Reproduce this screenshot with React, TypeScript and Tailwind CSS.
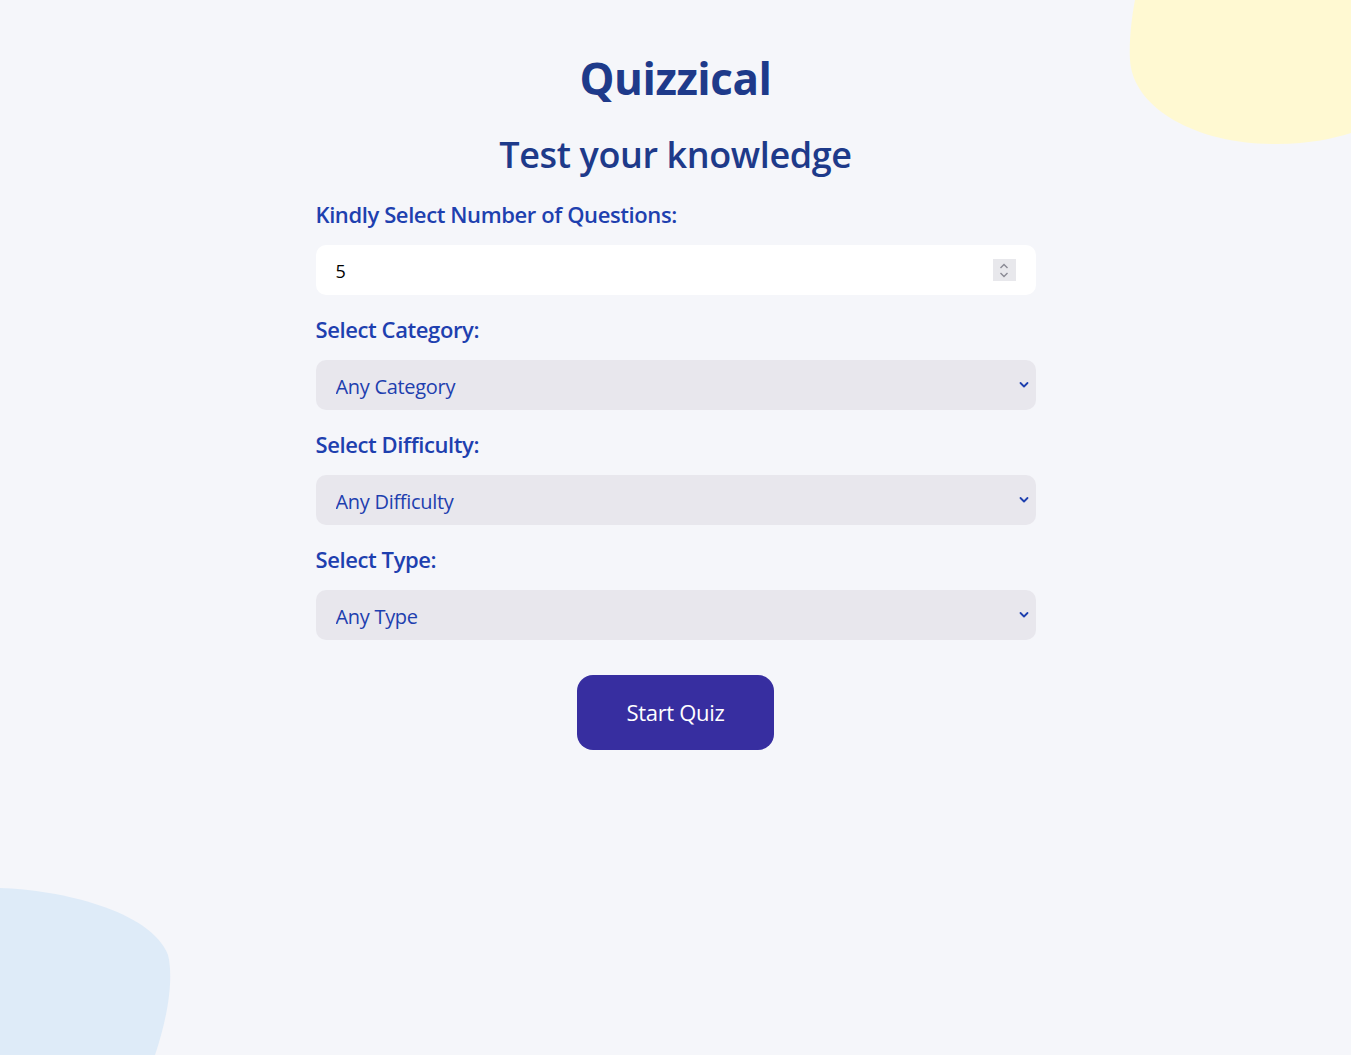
import { useState } from "react";

const font = { fontFamily: '"Open Sans", "Noto Sans", sans-serif' };

function Chevron() {
  return (
    <svg className="pointer-events-none absolute right-[7px] top-1/2 -translate-y-1/2" width="10" height="7" viewBox="0 0 10 7" fill="none">
      <path d="M1.5 1.5 L5 5 L8.5 1.5" stroke="#1e40af" strokeWidth="1.8" strokeLinecap="round" strokeLinejoin="round" />
    </svg>
  );
}

function SelectField({ label, value, options, onChange }: { label: string; value: string; options: string[]; onChange: (v: string) => void }) {
  return (
    <div className="flex flex-col">
      <label className="text-[22px] leading-[30px] font-semibold text-[#1e40af] mb-4 tracking-[-0.4px]">{label}</label>
      <div className="relative mb-[19px]">
        <select
          value={value}
          onChange={(e) => onChange(e.target.value)}
          className="h-[50px] w-full appearance-none rounded-[10px] bg-[#e8e7ed] pl-5 pt-[3px] text-[20px] text-[#1e40af] outline-none tracking-[-0.3px]"
          style={font}
        >
          {options.map((o) => (
            <option key={o}>{o}</option>
          ))}
        </select>
        <Chevron />
      </div>
    </div>
  );
}

export default function App() {
  const [count, setCount] = useState("5");
  const [category, setCategory] = useState("Any Category");
  const [difficulty, setDifficulty] = useState("Any Difficulty");
  const [type, setType] = useState("Any Type");

  return (
    <div className="relative min-h-screen overflow-hidden bg-[#f5f6fa]" style={font}>
      <svg className="absolute right-0 top-0" width="222" height="145" viewBox="1129 0 222 145">
        <path d="M1135 0 C1131 20 1129 45 1130 60 C1133 110 1200 145 1277 144 C1310 144 1335 138 1351 133 L1351 0 Z" fill="#fff9d2" />
      </svg>
      <svg className="absolute bottom-0 left-0" width="175" height="168" viewBox="0 887 175 168">
        <path d="M0 888 C60 890 150 910 168 955 C173 975 170 1010 155 1055 L0 1055 Z" fill="#deebf8" />
      </svg>

      <main className="relative mx-auto flex w-[720px] flex-col pt-[50px]">
        <h1 className="text-center text-[44px] leading-[56px] font-bold text-[#1e3a8a] tracking-[-0.5px]">Quizzical</h1>
        <h2 className="mt-[27px] text-center text-[36px] leading-[44px] font-semibold text-[#1e3a8a] tracking-[-0.4px]">Test your knowledge</h2>

        <div className="mt-[22px] flex flex-col">
          <label className="text-[22px] leading-[30px] font-semibold text-[#1e40af] mb-4 tracking-[-0.4px]">Kindly Select Number of Questions:</label>
          <div className="relative mb-[19px]">
            <input
              type="number"
              value={count}
              onChange={(e) => setCount(e.target.value)}
              className="h-[50px] w-full rounded-[10px] bg-white pl-5 pt-[2px] text-[18px] text-black outline-none [appearance:textfield] [&::-webkit-inner-spin-button]:appearance-none [&::-webkit-outer-spin-button]:appearance-none"
              style={font}
            />
            <div className="pointer-events-none absolute right-[20px] top-[14px] flex h-[22px] w-[23px] flex-col items-center justify-center gap-[3px] bg-[#e8e8ec]">
              <svg width="10" height="6" viewBox="0 0 10 6"><path d="M1.5 5 L5 1.5 L8.5 5" stroke="#8a8a94" strokeWidth="1.4" fill="none" /></svg>
              <svg width="10" height="6" viewBox="0 0 10 6"><path d="M1.5 1 L5 4.5 L8.5 1" stroke="#8a8a94" strokeWidth="1.4" fill="none" /></svg>
            </div>
          </div>

          <SelectField label="Select Category:" value={category} options={["Any Category", "General Knowledge", "Science & Nature", "History"]} onChange={setCategory} />
          <SelectField label="Select Difficulty:" value={difficulty} options={["Any Difficulty", "Easy", "Medium", "Hard"]} onChange={setDifficulty} />
          <SelectField label="Select Type:" value={type} options={["Any Type", "Multiple Choice", "True / False"]} onChange={setType} />
        </div>

        <button className="mx-auto mt-[16px] h-[75px] w-[197px] rounded-[16px] bg-[#372ea0] text-[22px] text-white tracking-[-0.3px]" style={font}>
          Start Quiz
        </button>
      </main>
    </div>
  );
}
